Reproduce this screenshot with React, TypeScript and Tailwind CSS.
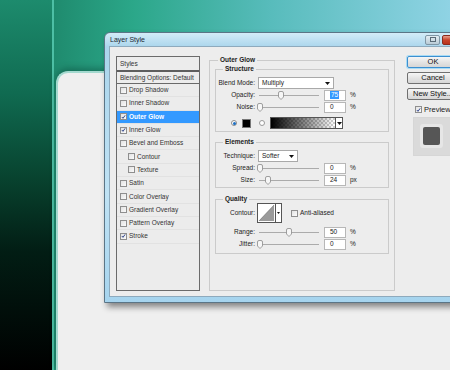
import type { ReactNode } from 'react';

const layers = [
    { label: 'Drop Shadow', checked: false, indent: false },
    { label: 'Inner Shadow', checked: false, indent: false },
    { label: 'Outer Glow', checked: true, indent: false, active: true },
    { label: 'Inner Glow', checked: true, indent: false },
    { label: 'Bevel and Emboss', checked: false, indent: false },
    { label: 'Contour', checked: false, indent: true },
    { label: 'Texture', checked: false, indent: true },
    { label: 'Satin', checked: false, indent: false },
    { label: 'Color Overlay', checked: false, indent: false },
    { label: 'Gradient Overlay', checked: false, indent: false },
    { label: 'Pattern Overlay', checked: false, indent: false },
    { label: 'Stroke', checked: true, indent: false },
];

function Check({ checked }: { checked: boolean }) {
    return (
        <span className="flex h-[7px] w-[7px] shrink-0 items-center justify-center border border-[#8e8e8e] bg-[linear-gradient(135deg,#e2e2e2,#fbfbfb)]">
            {checked && (
                <svg width="6" height="6" viewBox="0 0 6 6">
                    <path d="M1 3 L2.4 4.6 L5 1" fill="none" stroke="#243a86" strokeWidth="1.1" />
                </svg>
            )}
        </span>
    );
}

function Label({ children }: { children: ReactNode }) {
    return <span className="flex w-[33px] shrink-0 justify-end whitespace-nowrap">{children}</span>;
}

function Arrow() {
    return (
        <svg width="5" height="3" viewBox="0 0 5 3">
            <path d="M0 0 H5 L2.5 3 Z" fill="#111" />
        </svg>
    );
}

function Slider({ pos }: { pos: number }) {
    return (
        <div className="relative ml-[4px] flex h-full w-[60px] items-center">
            <div className="h-px w-full bg-[#ababab]" />
            <svg className="absolute top-[1.5px]" style={{ left: pos - 3 }} width="6" height="9" viewBox="0 0 6 9">
                <path d="M0.5 2 Q0.5 0.5 2 0.5 H4 Q5.5 0.5 5.5 2 V6 L3 8.5 L0.5 6 Z" fill="#f6f6f6" stroke="#8a8a8a" strokeWidth="0.8" />
            </svg>
        </div>
    );
}

function ValueBox({ children }: { children: ReactNode }) {
    return (
        <span className="ml-[5px] flex h-[11px] w-[22px] items-center border border-[#b7b7b7] bg-white pl-[5px] text-[#222]">
            {children}
        </span>
    );
}

function SliderRow({ label, pos, value, unit }: { label: string; pos: number; value: ReactNode; unit: string }) {
    return (
        <div className="flex h-[12px] items-center">
            <Label>{label}</Label>
            <Slider pos={pos} />
            <ValueBox>{value}</ValueBox>
            <span className="ml-[4px]">{unit}</span>
        </div>
    );
}

function Button({ children, primary }: { children: ReactNode; primary?: boolean }) {
    return (
        <div
            className={`flex h-[12px] w-[52px] items-center justify-center whitespace-nowrap rounded-[2px] border bg-[linear-gradient(180deg,#f6f6f6,#e4e4e4_50%,#d6d6d6)] text-[7.5px] text-[#111] ${
                primary ? 'border-[#3c8fd0] shadow-[0_0_0_1px_#a8dbf5]' : 'border-[#707070]'
            }`}
        >
            {children}
        </div>
    );
}

export default function App() {
    return (
        <div className="relative flex h-[370px] w-[450px] overflow-hidden font-['Liberation_Sans',Arial,sans-serif] text-[6.5px] leading-[8px] text-[#222]">
            {/* desktop background */}
            <div className="h-full w-[52px] bg-[linear-gradient(180deg,#1d8b6d_0%,#106b51_25%,#08432f_48%,#021d14_68%,#000_100%)]" />
            <div className="h-full w-[2px] bg-[#4dbfa5]" />
            <div className="flex flex-1 flex-col bg-[linear-gradient(90deg,#1f8b6e,#2ba789_20%,#58bcbc_55%,#8fd3e4)]">
                <div className="ml-[2px] mt-[71px] flex-1 rounded-tl-[12px] border-l-2 border-t-2 border-[#a4d9cf] bg-[#efefef] shadow-[0_-3px_6px_rgba(0,50,40,0.35)]" />
            </div>

            {/* Layer Style window */}
            <div className="absolute left-[104px] top-[32px] flex h-[271px] w-[372px] flex-col rounded-t-[6px] border border-[#5b7586] bg-[linear-gradient(180deg,#d3ecf8,#aad5ec_14px,#bfe2f4_60%,#a6d4ee)] pb-[5px] pl-[4px] shadow-[3px_4px_6px_rgba(0,0,0,0.45)]">
                <div className="flex h-[14px] items-center">
                    <span className="w-[316px] pl-[1px] text-[7px] text-[#1c2a33]">Layer Style</span>
                    <div className="flex h-[10px] w-[15px] items-center justify-center rounded-[2px] border border-[#7f96a5] bg-[linear-gradient(180deg,#e3edf3,#b9cbd6)]">
                        <div className="h-[5px] w-[6px] border border-[#5a6b77]" />
                    </div>
                    <div className="ml-[2px] flex h-[10px] w-[24px] items-center justify-center rounded-[2px] border border-[#8a2b1e] bg-[linear-gradient(180deg,#e8a08e,#c8432a_50%,#b8321c)] text-[7px] font-bold text-white">
                        x
                    </div>
                </div>

                <div className="flex flex-1 border border-[#8eaabd] bg-[#ededed] pb-[5px] pl-[6px] pt-[9px]">
                    {/* styles list */}
                    <div className="flex w-[84px] shrink-0 flex-col border border-[#6b6b6b] bg-[#ececec]">
                        <div className="flex h-[15px] items-center border-b-2 border-[#5e5e5e] pl-[3px] text-[#333]">Styles</div>
                        <div className="flex h-[12px] items-center border-b border-[#6a6a6a] pl-[3px] text-[#333]">
                            Blending Options: Default
                        </div>
                        {layers.map((l) => (
                            <div
                                key={l.label}
                                className={`flex h-[13.3px] items-center gap-[2px] border-b border-[#e2e2e2] ${l.indent ? 'pl-[11px]' : 'pl-[3px]'} ${
                                    l.active ? 'bg-[#3399ff] font-bold text-white' : 'text-[#333]'
                                }`}
                            >
                                <Check checked={l.checked} />
                                <span>{l.label}</span>
                            </div>
                        ))}
                    </div>

                    {/* Outer Glow settings */}
                    <fieldset className="ml-[9px] h-[235px] w-[186px] shrink-0 border border-[#cbcbcb] px-[5px] pt-[1px]">
                        <legend className="ml-[3px] px-[2px] font-bold leading-[8px] text-[#222]">Outer Glow</legend>

                        <fieldset className="border border-[#cbcbcb] px-[6px] pb-[2px] pt-[4px]">
                            <legend className="ml-[1px] px-[2px] font-bold leading-[8px]">Structure</legend>
                            <div className="flex h-[12px] items-center">
                                <Label>Blend Mode:</Label>
                                <div className="ml-[3px] flex h-[12px] w-[76px] items-center justify-between border border-[#a9a9a9] bg-white pl-[3px] pr-[3px]">
                                    <span>Multiply</span>
                                    <Arrow />
                                </div>
                            </div>
                            <SliderRow
                                label="Opacity:"
                                pos={22}
                                value={<span className="bg-[#3399ff] px-px text-white">75</span>}
                                unit="%"
                            />
                            <SliderRow label="Noise:" pos={1} value="0" unit="%" />
                            <div className="mt-[4px] flex h-[12px] items-center">
                                <span className="ml-[9px] flex h-[6px] w-[6px] items-center justify-center rounded-full border border-[#8c8c8c] bg-white">
                                    <span className="h-[3px] w-[3px] rounded-full bg-[#1d6fc4]" />
                                </span>
                                <span className="ml-[5px] h-[9px] w-[9px] border border-[#777] bg-black" />
                                <span className="ml-[8px] h-[6px] w-[6px] rounded-full border border-[#9a9a9a] bg-white" />
                                <div className="ml-[5px] flex h-[12px] w-[73px] border border-[#555]">
                                    <div className="flex-1 bg-[repeating-conic-gradient(#cfcfcf_0_25%,#fff_0_50%)] bg-[length:4px_4px]">
                                        <div className="h-full w-full bg-[linear-gradient(90deg,#000,rgba(0,0,0,0.55)_45%,rgba(0,0,0,0))]" />
                                    </div>
                                    <div className="flex w-[7px] items-center justify-center border-l border-[#555] bg-white">
                                        <Arrow />
                                    </div>
                                </div>
                            </div>
                        </fieldset>

                        <fieldset className="mt-[6px] border border-[#cbcbcb] px-[6px] pb-[1px] pt-[4px]">
                            <legend className="ml-[1px] px-[2px] font-bold leading-[8px]">Elements</legend>
                            <div className="flex h-[12px] items-center">
                                <Label>Technique:</Label>
                                <div className="ml-[3px] flex h-[12px] w-[40px] items-center justify-between border border-[#a9a9a9] bg-white pl-[3px] pr-[3px]">
                                    <span>Softer</span>
                                    <Arrow />
                                </div>
                            </div>
                            <SliderRow label="Spread:" pos={1} value="0" unit="%" />
                            <SliderRow label="Size:" pos={9} value="24" unit="px" />
                        </fieldset>

                        <fieldset className="mt-[7px] border border-[#cbcbcb] px-[6px] pb-[3px]">
                            <legend className="ml-[1px] px-[2px] font-bold leading-[8px]">Quality</legend>
                            <div className="flex h-[20px] items-center">
                                <Label>Contour:</Label>
                                <div className="ml-[2px] flex h-[20px] w-[25px] border border-[#555] bg-white">
                                    <svg className="flex-1" viewBox="0 0 18 18" preserveAspectRatio="none">
                                        <polygon points="1,17 17,1 17,17" fill="#9a9a9a" />
                                        <line x1="1" y1="17" x2="17" y2="1" stroke="#666" strokeWidth="0.6" />
                                    </svg>
                                    <div className="flex w-[6px] items-center justify-center border-l border-[#555]">
                                        <svg width="3" height="2" viewBox="0 0 3 2">
                                            <path d="M0 0 H3 L1.5 2 Z" fill="#111" />
                                        </svg>
                                    </div>
                                </div>
                                <span className="ml-[9px]">
                                    <Check checked={false} />
                                </span>
                                <span className="ml-[2px]">Anti-aliased</span>
                            </div>
                            <div className="mt-[3px]">
                                <SliderRow label="Range:" pos={30} value="50" unit="%" />
                            </div>
                            <SliderRow label="Jitter:" pos={1} value="0" unit="%" />
                        </fieldset>
                    </fieldset>

                    {/* buttons and preview */}
                    <div className="ml-[12px] flex w-[56px] shrink-0 flex-col">
                        <div className="flex flex-col gap-[4px]">
                            <Button primary>OK</Button>
                            <Button>Cancel</Button>
                            <Button>New Style...</Button>
                        </div>
                        <div className="ml-[8px] mt-[6px] flex h-[7px] items-center gap-[2px] text-[7.5px]">
                            <Check checked />
                            <span>Preview</span>
                        </div>
                        <div className="ml-[6px] mt-[4px] flex h-[39px] w-[46px] items-start border border-[#d6d6d6] bg-[#dadada] pl-[6px] pt-[6px]">
                            <div className="flex h-[24px] w-[23px] items-center justify-center rounded-[3px] bg-[#e6e6e6]">
                                <div className="h-[18px] w-[17px] rounded-[2px] bg-[#565656]" />
                            </div>
                        </div>
                    </div>
                </div>
            </div>
        </div>
    );
}
